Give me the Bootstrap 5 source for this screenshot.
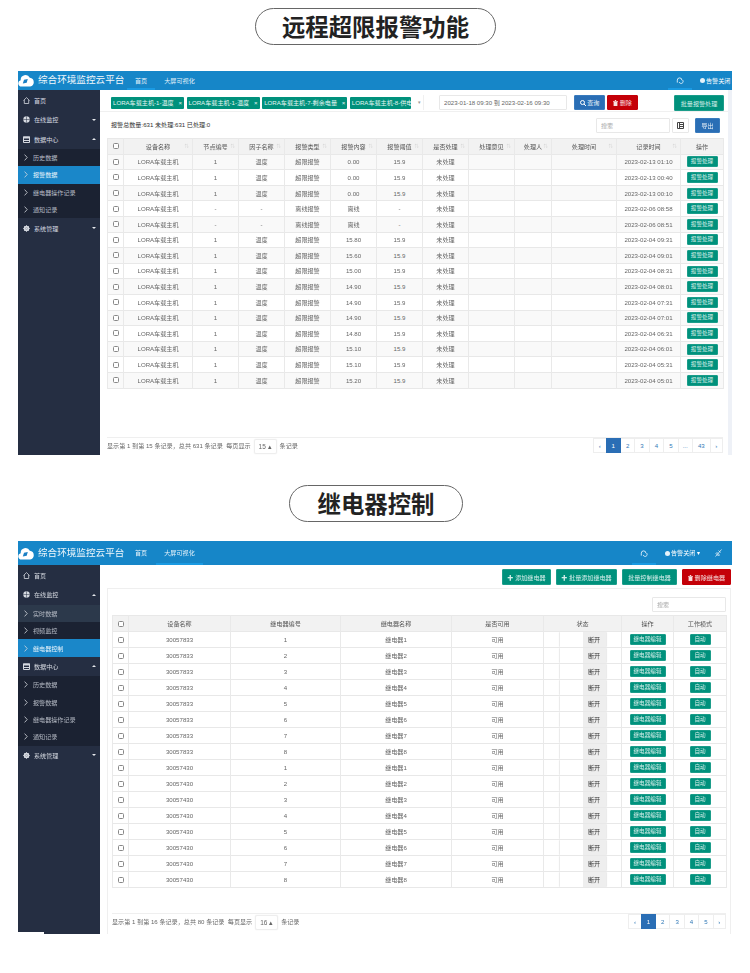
<!DOCTYPE html>
<html lang="zh-CN">
<head>
  <meta charset="UTF-8" />
  <meta name="viewport" content="width=device-width, initial-scale=1" />
  <title>远程超限报警功能</title>
  <link href="https://cdn.jsdelivr.net/npm/bootstrap@5.3.3/dist/css/bootstrap.min.css" rel="stylesheet">
  <style>
    body {
      font-family: "Liberation Sans", "Noto Sans CJK SC", sans-serif;
      background-color: #fff;
      color: #666;
      font-size: 6.1px;
      height: 973px;
      overflow: hidden;
    }

    .pill-title {
      font-family: "Noto Sans CJK SC", sans-serif;
      font-size: 23.4px;
      font-weight: 700;
      line-height: 35px;
      color: #222;
      border: 1px solid #666;
      border-radius: 19px;
      height: 37px;
      margin: 0 auto;
    }

    .pill-alarm { width: 241px; margin-top: 8px; margin-left: 255px; }
    .pill-relay { width: 174px; margin-top: 30px; margin-left: 289px; }

    .app-shot {
      width: 714px;
      margin-left: 18px;
      position: relative;
      filter: blur(.3px);
    }

    .shot-alarm { height: 384px; margin-top: 26px; }
    .shot-relay { height: 393px; margin-top: 19px; }

    /* top bar */
    .top-strip {
      background-color: #1686c8;
      color: #fff;
      flex: none;
      overflow: hidden;
    }

    .shot-alarm .top-strip { height: 19px; }
    .shot-relay .top-strip { height: 24px; }

    .brand-name { font-size: 9.6px; width: 89px; white-space: nowrap; color: #f2f8fc; }
    .brand-logo { width: 16px; height: 13px; margin-right: 4px; flex: none; }

    .top-tab {
      color: #e6f2fa;
      text-decoration: none;
      display: flex;
      align-items: center;
      justify-content: center;
      height: 100%;
      border-bottom: 2px solid transparent;
      padding-top: 2px;
    }

    .top-tab.on { border-bottom-color: #1a9ae2; }
    .tab-home { width: 28px; }
    .tab-big { width: 47px; margin-left: 1px; }

    .top-right { margin-left: auto; height: 100%; }
    .alarm-off { white-space: nowrap; }
    .shot-alarm .alarm-off { width: 32px; margin-left: 8px; }
    .chat-tab { width: 24px; }
    .shot-relay .alarm-off { margin-left: 9px; width: 39px; }
    .shot-relay .plug-ico { margin: 0 10px 0 11px; }
    .alarm-dot { width: 5px; height: 5px; margin-right: 1px; vertical-align: -.5px; }

    /* sidebar */
    .side-menu {
      width: 82px;
      flex: none;
      background-color: #252e42;
      color: #d5d9e0;
      padding-top: 1px;
    }

    .side-item {
      height: 19.3px;
      padding-left: 5px;
      padding-right: 4px;
      gap: 4px;
    }

    .side-sub { background-color: #1b2232; }

    .side-link {
      height: 17.4px;
      padding-left: 6px;
      gap: 5px;
      color: #b5bac4;
    }

    .side-link.on { background-color: #1a87c9; color: #e8f4fb; }
    .side-link.open { background-color: #2c394b; }
    .caret-up, .caret-down { margin-left: auto; width: 0; height: 0; border-left: 2.5px solid transparent; border-right: 2.5px solid transparent; }
    .caret-up { border-bottom: 2.5px solid #e6e8ec; }
    .caret-down { border-top: 2.5px solid #e6e8ec; }

    /* main panel */
    .main-area { min-width: 0; }
    .shot-alarm .main-area { background-color: #eef1f7; padding-right: 4px; }
    .shot-relay .main-area { background-color: #fff; padding-right: 1px; }
    .sheet { background-color: #fff; min-height: 0; }

    .filter-bar {
      height: 22px;
      padding: 5px 4px 0 11px;
      border-bottom: 1px solid #f0f0f0;
      flex: none;
    }

    .chip-box { width: 313px; height: 15px; gap: 2.6px; border-right: 1px solid #f0f0f0; overflow: hidden; }

    .chip-tag {
      background-color: #00917c;
      color: #e6f6f3;
      font-size: 6.1px;
      font-weight: 400;
      border-radius: 1px;
      height: 12px;
      line-height: 12px;
      padding: 0 2px;
      white-space: nowrap;
      flex: none;
      text-align: left;
      justify-content: space-between;
    }

    .chip-short { width: 73px; }
    .chip-long { width: 85px; }
    .chip-cut { width: 61px; overflow: hidden; }
    .chip-arrow { color: #999; font-size: 5px; width: 12px; text-align: center; flex: none; }

    .date-box, .find-box {
      font-size: 6.1px;
      color: #666;
      padding: 0 4px;
      height: 15px;
      min-height: 0;
      border-radius: 1px;
      border: 1px solid #e8e8e8;
    }

    .date-box { width: 128px; margin-left: 15px; }
    .find-box { width: 74px; color: #999; }
    .find-box::placeholder { color: #aaa; }

    .tiny-btn {
      font-size: 6.1px;
      padding: 0;
      height: 15px;
      line-height: 13px;
      border-radius: 1px;
      color: #e8f5f3;
      white-space: nowrap;
      flex: none;
    }

    .btn-teal { background-color: #00917c; border-color: #1b9d8a; color: #d5eeea; }
    .btn-blue { background-color: #2a6eb5; border-color: #3a7bbd; color: #e8f0f8; }
    .btn-red { background-color: #c40008; border-color: #c40008; color: #f7dfe0; }
    .btn-plain { background-color: #fff; border-color: #e8e8e8; color: #555; }

    .btn-query { width: 31px; margin-left: 7px; }
    .btn-remove { width: 31px; margin-left: 2px; }
    .btn-batch { width: 50px; margin-left: auto; height: 16px; }
    .btn-export { width: 25px; height: 15px; margin-left: 6px; }
    .btn-columns { width: 17px; margin-left: 2px; }

    .count-row { height: 26px; padding: 0 8px 0 11px; color: #333; flex: none; }

    .grid-tbl {
      table-layout: fixed;
      border-collapse: collapse;
      margin: 0;
      color: #666;
      font-size: 6.1px;
      border-color: #e8e8e8;
      --bs-table-striped-color: #666;
      --bs-table-striped-bg: #f9f9f9;
    }

    .grid-tbl > :not(caption) > * > * {
      padding: 0;
      text-align: center;
      vertical-align: middle;
      color: #666;
      border-color: #e9e9e9;
      overflow: hidden;
      white-space: nowrap;
      position: relative;
    }

    .grid-tbl thead th { background-color: #f2f2f2; font-weight: 400; color: #555; }
    .grid-tbl .form-check-input {
      width: 6px;
      height: 6px;
      border: 1px solid #888;
      border-radius: 1.5px;
      display: block;
      margin: 0 auto;
    }

    .sort-dot { color: #d5d5d5; font-size: 4.5px; position: absolute; right: 3px; top: 50%; transform: translateY(-50%); }

    .alarm-tbl { width: 616px; margin-left: 7px; }
    .alarm-tbl th, .alarm-tbl td { height: 15.6px; }
    .alarm-tbl col:nth-child(1) { width: 16px; }
    .alarm-tbl col:nth-child(2) { width: 69px; }
    .alarm-tbl col:nth-child(3),
    .alarm-tbl col:nth-child(4),
    .alarm-tbl col:nth-child(5),
    .alarm-tbl col:nth-child(6),
    .alarm-tbl col:nth-child(7),
    .alarm-tbl col:nth-child(8),
    .alarm-tbl col:nth-child(9) { width: 46px; }
    .alarm-tbl col:nth-child(10) { width: 37px; }
    .alarm-tbl col:nth-child(11) { width: 65px; }
    .alarm-tbl col:nth-child(12) { width: 64px; }
    .alarm-tbl col:nth-child(13) { width: 43px; }

    .row-btn {
      display: block;
      margin: 0 auto;
      height: 11px;
      line-height: 9px;
      font-size: 5.6px;
      border-radius: 1px;
      padding: 0;
      background-color: #00917c;
      border: 1px solid #1b9d8a;
      color: #d5eeea;
    }

    .alarm-tbl .row-btn { width: 31px; }
    .relay-tbl .btn-edit { width: 36px; }
    .relay-tbl .btn-auto { width: 21px; }

    .foot-bar { margin-top: auto; border-top: 1px solid #efefef; flex: none; line-height: 16px; }
    .shot-alarm .foot-bar { margin-left: 7px; margin-right: 5px; height: 18px; }
    .shot-relay .foot-bar { height: 21px; }

    .size-pick {
      display: inline-block;
      width: 23px;
      height: 15px;
      line-height: 13px;
      margin: 1px 3px 0;
      text-align: center;
      border: 1px solid #eee;
      border-radius: 2px;
      box-shadow: 0 0 1px rgba(0, 0, 0, .15);
      font-size: 6.5px;
    }

    .page-strip { margin: 0; }
    .page-strip .page-link {
      font-size: 6.1px;
      color: #337ab7;
      height: 15px;
      line-height: 13px;
      padding: 0;
      min-width: 15.4px;
      text-align: center;
      border-color: #eee;
      border-radius: 0 !important;
    }

    .page-strip .active .page-link { background-color: #2a6eb5; border-color: #2a6eb5; color: #fff; }
    .page-strip .wide .page-link { min-width: 18.7px; }
    .page-strip .arrow .page-link { min-width: 13.4px; }

    /* relay part */
    .relay-tools { height: 23px; gap: 5px; padding-top: 4px; flex: none; }
    .relay-tools .tiny-btn { height: 16px; }
    .tool-a { width: 49px; }
    .tool-b { width: 61px; }
    .tool-c { width: 55px; }
    .tool-d { width: 49px; }

    .relay-sheet {
      margin-left: 7px;
      border: 1px solid #efefef;
      border-bottom: 0;
      padding: 0 4px;
      min-height: 0;
    }

    .find-row { height: 26px; padding-bottom: 3px; flex: none; }
    .relay-tbl { width: 614px; }
    .relay-tbl th, .relay-tbl td { height: 16px; }
    .relay-tbl col:nth-child(1) { width: 16px; }
    .relay-tbl col:nth-child(2) { width: 102px; }
    .relay-tbl col:nth-child(3) { width: 110px; }
    .relay-tbl col:nth-child(4) { width: 111px; }
    .relay-tbl col:nth-child(5) { width: 92px; }
    .relay-tbl col:nth-child(6) { width: 78px; }
    .relay-tbl col:nth-child(7) { width: 52px; }
    .relay-tbl col:nth-child(8) { width: 53px; }

    .state-group { width: 46px; height: 15px; margin: 0 auto; box-shadow: 0 0 1.5px rgba(0, 0, 0, .3); }
    .state-blank { width: 23px; background-color: #fff; }
    .state-word { width: 23px; background-color: #eee; color: #333; line-height: 16px; }

    .side-stub {
      position: absolute;
      left: 0;
      bottom: 0;
      width: 26px;
      height: 2px;
      background-color: #fff;
    }
  </style>
</head>
<body>

  <!-- 远程超限报警功能 -->
  <div class="pill-title pill-alarm text-center">远程超限报警功能</div>

  <div class="app-shot shot-alarm d-flex flex-column">
    <div class="top-strip d-flex align-items-center">
      <svg class="brand-logo" viewBox="0 0 16 13"><path fill="#fff" d="M3.500 12.500a3.200 3.200 0 0 1-.8-6.300A4.800 4.800 0 0 1 11.800 3.800a4.400 4.400 0 0 1 .4 8.700z"/><path fill="#1a7fc4" d="M4.800 9.500l1.200-3.700 3.800-.8-1.100 3.700z"/></svg>
      <span class="brand-name">综合环境监控云平台</span>
      <a class="top-tab tab-home on" href="#">首页</a>
      <a class="top-tab tab-big" href="#">大屏可视化</a>
      <div class="top-right d-flex align-items-center">
        <a class="top-tab chat-tab on" href="#"><svg width="8" height="7" viewBox="0 0 8 7"><path fill="none" stroke="#e6f2fa" stroke-width=".9" d="M1.300 5.600V3.200a2.300 2.300 0 0 1 4.600 0M3.200 5a2 2 0 1 0 3.300-2"/></svg></a>
        <span class="alarm-off"><svg class="alarm-dot" viewBox="0 0 5 5"><circle cx="2.500" cy="2.500" r="2.500" fill="#e6f2fa"/></svg>告警关闭</span>
      </div>
    </div>
    <div class="d-flex flex-grow-1" style="min-height:0">
      <div class="side-menu" id="alarmMenu"></div>
      <div class="main-area flex-grow-1 d-flex">
        <div class="sheet flex-grow-1 d-flex flex-column">
          <div class="filter-bar d-flex">
            <div class="chip-box d-flex align-items-center">
              <span class="badge d-flex chip-tag chip-short"><span>LORA车载主机-1-温度</span><span>×</span></span>
              <span class="badge d-flex chip-tag chip-short"><span>LORA车载主机-1-温度</span><span>×</span></span>
              <span class="badge d-flex chip-tag chip-long"><span>LORA车载主机-7-剩余电量</span><span>×</span></span>
              <span class="badge chip-tag chip-cut">LORA车载主机-8-供电</span>
              <span class="chip-arrow">▾</span>
            </div>
            <input class="form-control date-box" value="2023-01-18 09:30 到 2023-02-16 09:30" />
            <button class="btn tiny-btn btn-blue btn-query">
              <svg width="6" height="6" viewBox="0 0 6 6"><circle cx="2.500" cy="2.500" r="2" fill="none" stroke="#fff"/><path stroke="#fff" d="M4 4l2 2"/></svg> 查询
            </button>
            <button class="btn tiny-btn btn-red btn-remove">
              <svg width="5" height="6" viewBox="0 0 5 6"><path fill="#f7dfe0" d="M0 1h5v.7H0zM1.800 0h1.400v1H1.800zM.6 2h3.800v4H.6z"/></svg> 删除
            </button>
            <button class="btn tiny-btn btn-teal btn-batch">批量报警处理</button>
          </div>
          <div class="count-row d-flex align-items-center">
            <span>报警总数量:631 未处理:631 已处理:0</span>
            <input class="form-control find-box ms-auto" placeholder="搜索" />
            <button class="btn tiny-btn btn-plain btn-columns">
              <svg width="7" height="7" viewBox="0 0 7 7"><path fill="none" stroke="#444" d="M.5.5h6v6h-6zM2.500.5v6M2.500 2.500h4M2.500 4.500h4"/></svg>
            </button>
            <button class="btn tiny-btn btn-blue btn-export">导出</button>
          </div>
          <table class="table table-bordered table-striped grid-tbl alarm-tbl">
            <colgroup><col><col><col><col><col><col><col><col><col><col><col><col><col></colgroup>
            <thead>
              <tr id="alarmHead"></tr>
            </thead>
            <tbody id="alarmBody"></tbody>
          </table>
          <div class="foot-bar d-flex align-items-start">
            <span>显示第 1 到第 15 条记录，总共 631 条记录 &nbsp;每页显示</span>
            <span class="size-pick">15 ▴</span>
            <span>条记录</span>
            <ul class="pagination page-strip ms-auto" id="alarmPages"></ul>
          </div>
        </div>
      </div>
    </div>
  </div>

  <!-- 继电器控制 -->
  <div class="pill-title pill-relay text-center">继电器控制</div>

  <div class="app-shot shot-relay d-flex flex-column">
    <div class="top-strip d-flex align-items-center">
      <svg class="brand-logo" viewBox="0 0 16 13"><path fill="#fff" d="M3.500 12.500a3.200 3.200 0 0 1-.8-6.300A4.800 4.800 0 0 1 11.800 3.800a4.400 4.400 0 0 1 .4 8.700z"/><path fill="#1a7fc4" d="M4.800 9.500l1.200-3.700 3.800-.8-1.100 3.700z"/></svg>
      <span class="brand-name">综合环境监控云平台</span>
      <a class="top-tab tab-home" href="#">首页</a>
      <a class="top-tab tab-big on" href="#">大屏可视化</a>
      <div class="top-right d-flex align-items-center">
        <a class="top-tab chat-tab on" href="#"><svg width="8" height="7" viewBox="0 0 8 7"><path fill="none" stroke="#e6f2fa" stroke-width=".9" d="M1.300 5.600V3.200a2.300 2.300 0 0 1 4.600 0M3.200 5a2 2 0 1 0 3.300-2"/></svg></a>
        <span class="alarm-off"><svg class="alarm-dot" viewBox="0 0 5 5"><circle cx="2.500" cy="2.500" r="2.500" fill="#e6f2fa"/></svg>告警关闭 ▾</span>
        <svg class="plug-ico" width="7" height="8" viewBox="0 0 7 8"><path fill="none" stroke="#e6f2fa" stroke-width=".8" d="M.5 7.500L6.500.5M2 3.500l2.500 2.500-1 1-2.500-2.500zM3.500 1.500l2 2"/></svg>
      </div>
    </div>
    <div class="d-flex flex-grow-1" style="min-height:0">
      <div class="side-menu" id="relayMenu"></div>
      <div class="main-area flex-grow-1 d-flex flex-column">
        <div class="relay-tools d-flex justify-content-end">
          <button class="btn tiny-btn btn-teal tool-a">✚ 添加继电器</button>
          <button class="btn tiny-btn btn-teal tool-b">✚ 批量添加继电器</button>
          <button class="btn tiny-btn btn-teal tool-c">批量控制继电器</button>
          <button class="btn tiny-btn btn-red tool-d">
            <svg width="5" height="6" viewBox="0 0 5 6"><path fill="#f7dfe0" d="M0 1h5v.7H0zM1.800 0h1.400v1H1.800zM.6 2h3.800v4H.6z"/></svg> 删除继电器
          </button>
        </div>
        <div class="relay-sheet flex-grow-1 d-flex flex-column">
          <div class="find-row d-flex align-items-end justify-content-end">
            <input class="form-control find-box" placeholder="搜索" />
          </div>
          <table class="table table-bordered grid-tbl relay-tbl">
            <colgroup><col><col><col><col><col><col><col><col></colgroup>
            <thead>
              <tr>
                <th><input class="form-check-input" type="checkbox" /></th>
                <th>设备名称</th>
                <th>继电器编号</th>
                <th>继电器名称</th>
                <th>是否可用</th>
                <th>状态</th>
                <th>操作</th>
                <th>工作模式</th>
              </tr>
            </thead>
            <tbody id="relayBody"></tbody>
          </table>
          <div class="foot-bar d-flex align-items-start">
            <span>显示第 1 到第 16 条记录，总共 80 条记录 &nbsp;每页显示</span>
            <span class="size-pick">16 ▴</span>
            <span>条记录</span>
            <ul class="pagination page-strip ms-auto" id="relayPages"></ul>
          </div>
        </div>
      </div>
    </div>
    <div class="side-stub"></div>
  </div>

  <script src="https://cdn.jsdelivr.net/npm/bootstrap@5.3.3/dist/js/bootstrap.bundle.min.js"></script>
  <script>
    const icons = {
      home: '<svg width="7" height="7" viewBox="0 0 7 7"><path fill="none" stroke="#d5d9e0" stroke-width=".8" d="M.5 3.500L3.500.6l3 2.900M1.300 3v3.500h4.400V3"/></svg>',
      globe: '<svg width="7" height="7" viewBox="0 0 7 7"><circle cx="3.500" cy="3.500" r="3.200" fill="#d5d9e0"/><path fill="none" stroke="#252e42" stroke-width=".5" d="M.3 3.500h6.400M3.500.3v6.400"/></svg>',
      data: '<svg width="7" height="7" viewBox="0 0 7 7"><path fill="#d5d9e0" d="M0 .5h7v2H0z"/><path fill="none" stroke="#d5d9e0" d="M.5 1h6v5.500h-6zM.5 4.500h6"/></svg>',
      gear: '<svg width="7" height="7" viewBox="0 0 7 7"><circle cx="3.500" cy="3.500" r="2" fill="none" stroke="#d5d9e0" stroke-width="1.500"/><path stroke="#d5d9e0" d="M3.500 0v7M0 3.500h7M1 1l5 5M6 1l-5 5" stroke-width=".7"/></svg>',
      chev: '<svg width="4" height="7" viewBox="0 0 4 7"><path fill="none" stroke="#d5d9e0" stroke-width=".8" d="M.6.6L3.200 3.500.6 6.400"/></svg>'
    };

    function mainItem(icon, text, caret) {
      const arrow = caret ? `<span class="caret-${caret}"></span>` : "";
      return `<div class="side-item d-flex align-items-center">${icons[icon]}<span>${text}</span>${arrow}</div>`;
    }

    function subList(items) {
      const rows = items.map(it =>
        `<div class="side-link d-flex align-items-center ${it[1] || ""}">${icons.chev}<span>${it[0]}</span></div>`
      ).join("");
      return `<div class="side-sub">${rows}</div>`;
    }

    document.getElementById("alarmMenu").innerHTML =
      mainItem("home", "首页") +
      mainItem("globe", "在线监控", "down") +
      mainItem("data", "数据中心", "up") +
      subList([["历史数据"], ["报警数据", "on"], ["继电器操作记录"], ["通知记录"]]) +
      mainItem("gear", "系统管理", "down");

    document.getElementById("relayMenu").innerHTML =
      mainItem("home", "首页") +
      mainItem("globe", "在线监控", "up") +
      subList([["实时数据", "open"], ["视频监控"], ["继电器控制", "on"]]) +
      mainItem("data", "数据中心", "up") +
      subList([["历史数据"], ["报警数据"], ["继电器操作记录"], ["通知记录"]]) +
      mainItem("gear", "系统管理", "down");

    const alarmCols = ["设备名称", "节点编号", "因子名称", "报警类型", "报警内容", "报警阈值", "是否处理", "处理意见", "处理人", "处理时间", "记录时间"];
    document.getElementById("alarmHead").innerHTML =
      '<th><input class="form-check-input" type="checkbox" /></th>' +
      alarmCols.map(c => `<th>${c}<span class="sort-dot">⇅</span></th>`).join("") +
      "<th>操作</th>";

    const alarms = [
      ["0.00", "2023-02-13 01:10"], ["0.00", "2023-02-13 00:40"], ["0.00", "2023-02-13 00:10"],
      ["离线", "2023-02-06 08:58"], ["离线", "2023-02-06 08:51"],
      ["15.80", "2023-02-04 09:31"], ["15.60", "2023-02-04 09:01"], ["15.00", "2023-02-04 08:31"],
      ["14.90", "2023-02-04 08:01"], ["14.90", "2023-02-04 07:31"], ["14.90", "2023-02-04 07:01"],
      ["14.80", "2023-02-04 06:31"], ["15.10", "2023-02-04 06:01"], ["15.10", "2023-02-04 05:31"],
      ["15.20", "2023-02-04 05:01"]
    ];

    document.getElementById("alarmBody").innerHTML = alarms.map(a => {
      const off = a[0] === "离线";
      return `<tr>
        <td><input class="form-check-input" type="checkbox" /></td>
        <td>LORA车载主机</td>
        <td>${off ? "-" : "1"}</td>
        <td>${off ? "-" : "温度"}</td>
        <td>${off ? "离线报警" : "超限报警"}</td>
        <td>${a[0]}</td>
        <td>${off ? "-" : "15.9"}</td>
        <td>未处理</td>
        <td></td><td></td><td></td>
        <td>${a[1]}</td>
        <td><button class="btn row-btn">报警处理</button></td>
      </tr>`;
    }).join("");

    const relays = [];
    [30057833, 30057430].forEach(id => {
      for (let n = 1; n <= 8; n++) relays.push([id, n]);
    });

    document.getElementById("relayBody").innerHTML = relays.map(r => `<tr>
        <td><input class="form-check-input" type="checkbox" /></td>
        <td>${r[0]}</td>
        <td>${r[1]}</td>
        <td>继电器${r[1]}</td>
        <td>可用</td>
        <td><div class="state-group d-flex"><span class="state-blank"></span><span class="state-word">断开</span></div></td>
        <td><button class="btn row-btn btn-edit">继电器编辑</button></td>
        <td><button class="btn row-btn btn-auto">自动</button></td>
      </tr>`).join("");

    function pages(labels) {
      return labels.map(p => {
        const cls = p === "1" ? "active" : p === "43" ? "wide" : (p === "‹" || p === "›") ? "arrow" : "";
        return `<li class="page-item ${cls}"><a class="page-link" href="#">${p}</a></li>`;
      }).join("");
    }

    document.getElementById("alarmPages").innerHTML = pages(["‹", "1", "2", "3", "4", "5", "...", "43", "›"]);
    document.getElementById("relayPages").innerHTML = pages(["‹", "1", "2", "3", "4", "5", "›"]);
  </script>

</body>
</html>
